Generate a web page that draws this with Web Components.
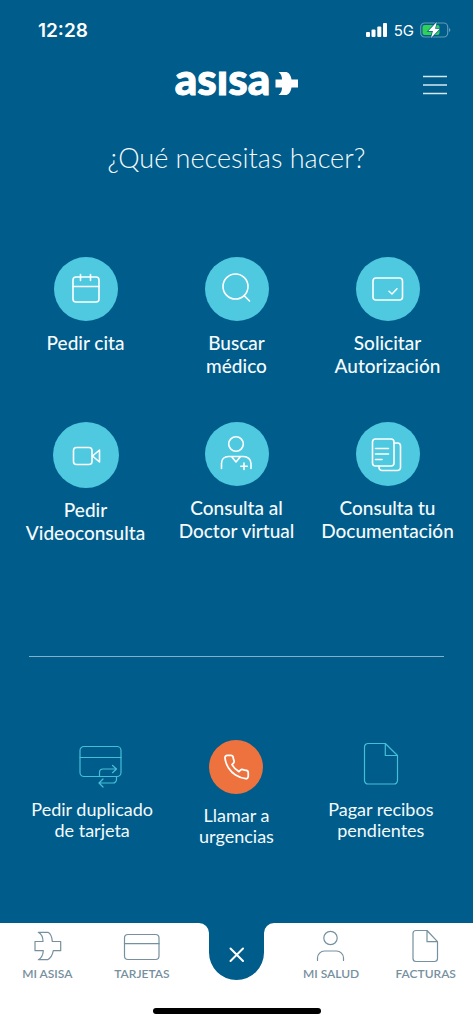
<!DOCTYPE html>
<html lang="es">
<head>
<meta charset="utf-8">
<meta name="viewport" content="width=device-width, initial-scale=1">
<title>asisa</title>
<style>
  html { background: #005c8a; }
  body { margin: 0; font-family: Lato, "Open Sans", sans-serif; color: #f4fafd; }
</style>
</head>
<body>
<asisa-home></asisa-home>

<script>
const ICONS = {
  calendar: [64, 64, '<rect x="19" y="20" width="26" height="25" rx="3"/><path d="M19 29.5h26M26.500 17.500v6M36.500 17.500v6"/>'],
  search: [64, 64, '<circle cx="30.500" cy="29.500" r="12.500"/><path d="M39 38.500l5.500 5.500"/>'],
  authorize: [64, 64, '<rect x="17" y="21" width="29.500" height="22" rx="3"/><path stroke-width="1.5" d="M33 34.300l3 2.700 5-5.200"/>'],
  video: [66, 66, '<rect x="20.500" y="25.500" width="18.500" height="17" rx="3"/><path d="M39.500 34l7-6v12z"/>'],
  doctor: [64, 64, '<circle cx="31" cy="22" r="7.300"/><path d="M16.500 46.500v-5c0-4.500 3-7 7-7h15c4 0 7.500 2.500 7.500 7v5M26.500 34.500l4.500 5.500 4.500-5.500M39 41v6.500M35.800 44.200h6.500"/>'],
  documents: [64, 64, '<rect x="16.500" y="17" width="21.500" height="27" rx="3"/><path d="M38 21h3.500a3 3 0 0 1 3 3v21.500a3 3 0 0 1-3 3H26a3 3 0 0 1-3-3V44M19.500 26.500h13M19.500 32h13M19.500 37.500h6.500"/>'],
  duplicate: [72, 48, '<rect x="24" y="6.500" width="41" height="30" rx="4"/><path d="M24 17.500h41M43.500 36v-3.500a3.500 3.500 0 0 1 3.500-3.500h13M56.500 25.500l4 3.500-4 3.700M60.500 37v2.500a3.500 3.500 0 0 1-3.500 3.500H43.500M47 39l-4 4 4 4"/>'],
  receipt: [72, 48, '<path d="M40.300 3.500H23a3.500 3.500 0 0 0-3.500 3.500v33.500a3.500 3.500 0 0 0 3.500 3.500h26a3.500 3.500 0 0 0 3.500-3.500V15.500zM40.300 3.500v12h12.200"/>'],
  phone: [54, 54, '<path transform="translate(13.500 13) scale(1.170)" d="M22 16.920v3a2 2 0 0 1-2.180 2 19.790 19.790 0 0 1-8.630-3.070 19.500 19.500 0 0 1-6-6 19.790 19.790 0 0 1-3.070-8.670A2 2 0 0 1 4.110 2h3a2 2 0 0 1 2 1.720 12.840 12.840 0 0 0 .7 2.810 2 2 0 0 1-.45 2.110L8.090 9.910a16 16 0 0 0 6 6l1.270-1.270a2 2 0 0 1 2.110-.45 12.840 12.840 0 0 0 2.810.7A2 2 0 0 1 22 16.920z"/>'],
  asisa: [40, 40, '<path d="M8 16.500h8c0-4-1.500-7.500-4.700-9.200H21c3 1.500 4 5 4.300 9.200h8.400v9.200h-7.400c-.8 4-2.500 7.500-5.600 9H11.300c3.500-1.800 4.700-5 5-9H8z"/>'],
  card: [40, 40, '<rect x="2.500" y="9.500" width="34.500" height="25" rx="3.500"/><path d="M2.500 18.700H37"/>'],
  person: [40, 40, '<circle cx="19.500" cy="13" r="6.700"/><path d="M6.500 35.500v-2.500a7 7 0 0 1 7-7h12a7 7 0 0 1 7 7v2.500"/>'],
  invoice: [40, 40, '<path d="M21 5.500h-11a3 3 0 0 0-3 3v25a3 3 0 0 0 3 3h18.500a3 3 0 0 0 3-3V16.700zM21 5.500v11.200H31.500"/>'],
  menu: [24, 24, '<path d="M0 4.500h24M0 13h24M0 21.500h24"/>']
};

class UiIcon extends HTMLElement {
  connectedCallback() {
    const [w, h, body] = ICONS[this.getAttribute('name')];
    this.attachShadow({ mode: 'open' }).innerHTML = `
      <style>
        :host { display: block; }
        svg { display: block; fill: none; stroke: currentColor; stroke-width: var(--stroke, 1.6);
              stroke-linecap: round; stroke-linejoin: round; }
      </style>
      <svg width="${w}" height="${h}" viewBox="0 0 ${w} ${h}" aria-hidden="true">${body}</svg>`;
  }
}
customElements.define('ui-icon', UiIcon);

class StatusBar extends HTMLElement {
  constructor() {
    super();
    this.attachShadow({ mode: 'open' }).innerHTML = `
      <style>
        :host { display: flex; align-items: center; justify-content: space-between; height: 60px;
                padding: 0 22px 0 38px; color: #fff; font-family: Inter, sans-serif; }
        time { font-size: 19px; font-weight: 600; }
        .right { display: flex; align-items: center; gap: 6px; font-size: 15px; font-weight: 400; }
        svg { display: block; }
      </style>
      <time>12:28</time>
      <div class="right">
        <svg width="22" height="16" viewBox="0 0 22 16" fill="#fff" aria-hidden="true">
          <rect x="0" y="10" width="4" height="5" rx="1"/><rect x="5.500" y="7.500" width="4" height="7.500" rx="1"/>
          <rect x="11.300" y="4.500" width="4" height="10.500" rx="1"/><rect x="17" y="1" width="4" height="14" rx="1"/>
        </svg>
        <span>5G</span>
        <svg width="31" height="18" viewBox="0 0 31 18" aria-hidden="true">
          <rect x=".7" y="2" width="27" height="14" rx="4" fill="none" stroke="#5f9ab8" stroke-width="1.200"/>
          <path d="M29.300 7v4c1.300-.5 1.300-3.500 0-4z" fill="#8fb8cd"/>
          <rect x="2.500" y="4" width="17" height="10" rx="2" fill="#30d158"/>
          <path d="M16.800 1L8.300 10h4.600L11 17l8.800-9.300h-4.700z" fill="#fff" stroke="#005c8a" stroke-width="1.400" paint-order="stroke"/>
        </svg>
      </div>`;
  }
}
customElements.define('status-bar', StatusBar);

class AppHeader extends HTMLElement {
  constructor() {
    super();
    this.attachShadow({ mode: 'open' }).innerHTML = `
      <style>
        :host { display: grid; grid-template-columns: 1fr auto 1fr; align-items: center; height: 48px; padding: 0 26px; color: #fff; }
        .logo { grid-column: 2; display: flex; align-items: center; gap: 5px; }
        .word { padding-bottom: 13px; font-size: 44px; line-height: 32px; font-weight: 900;
                -webkit-text-stroke: 1px #fff; clip-path: inset(9px -2px 0 -2px); }
        button { justify-self: end; padding: 0; border: 0; background: none; color: #d5e7f0; cursor: pointer; --stroke: 1.500; }
        svg { display: block; }
      </style>
      <div class="logo">
        <span class="word">asisa</span>
        <svg width="23" height="24" viewBox="0 0 23 24" fill="#fff" aria-hidden="true">
          <path d="M.5 7.500h6.500C7 4.500 6 1.500 3.500 0h8c3 1 4.500 4 5 7.500h6.500v8h-6.500c-.5 3.500-2 6.500-5 7.500h-8C6 21.500 7 18.500 7 15.500H.5z"/>
        </svg>
      </div>
      <button type="button" aria-label="Menú"><ui-icon name="menu"></ui-icon></button>`;
  }
}
customElements.define('app-header', AppHeader);

class ActionTile extends HTMLElement {
  connectedCallback() {
    this.attachShadow({ mode: 'open' }).innerHTML = `
      <style>
        :host { display: block; }
        button { width: 100%; padding: 0; border: 0; background: none; color: inherit; font: inherit; cursor: pointer;
                 display: flex; flex-direction: column; align-items: center; gap: 10px; }
        ui-icon { background: #4fc9e0; color: #fff; border-radius: 50%; }
        .label { font-size: 19px; line-height: 23px; font-weight: 500; text-align: center; white-space: nowrap; }
      </style>
      <button type="button">
        <ui-icon name="${this.getAttribute('icon')}"></ui-icon>
        <span class="label"><slot></slot></span>
      </button>`;
  }
}
customElements.define('action-tile', ActionTile);

class QuickAction extends HTMLElement {
  connectedCallback() {
    this.attachShadow({ mode: 'open' }).innerHTML = `
      <style>
        :host { display: block; }
        button { width: 100%; padding: 0; border: 0; background: none; color: inherit; font: inherit; cursor: pointer;
                 display: flex; flex-direction: column; align-items: center; gap: 11px; }
        ui-icon { color: #45bfd8; --stroke: 1.200; }
        :host([urgent]) ui-icon { background: #ee723e; color: #fff; border-radius: 50%; --stroke: 1.500; }
        .label { font-size: 18px; line-height: 21px; text-align: center; white-space: nowrap; }
      </style>
      <button type="button">
        <ui-icon name="${this.getAttribute('icon')}"></ui-icon>
        <span class="label"><slot></slot></span>
      </button>`;
  }
}
customElements.define('quick-action', QuickAction);

class NavItem extends HTMLElement {
  connectedCallback() {
    this.attachShadow({ mode: 'open' }).innerHTML = `
      <style>
        :host { display: block; }
        a { display: flex; flex-direction: column; align-items: center; color: #76909e; text-decoration: none; --stroke: 1.200; }
        span { font-size: 12px; line-height: 18px; font-weight: 600; white-space: nowrap; }
      </style>
      <a href="#${this.getAttribute('icon')}">
        <ui-icon name="${this.getAttribute('icon')}"></ui-icon>
        <span><slot></slot></span>
      </a>`;
  }
}
customElements.define('nav-item', NavItem);

class BottomNav extends HTMLElement {
  constructor() {
    super();
    this.attachShadow({ mode: 'open' }).innerHTML = `
      <style>
        :host { display: block; background: #fff; }
        nav { display: grid; grid-template-columns: repeat(5, 1fr); height: 85px; }
        nav-item { padding-top: 2px; }
        button { justify-self: center; align-self: start; padding: 0; border: 0; background: none; cursor: pointer; }
        svg { display: block; }
        .home { width: 168px; height: 6px; margin: 0 auto; border-radius: 3px; background: #000; }
        footer { padding-bottom: 10px; }
      </style>
      <nav>
        <nav-item icon="asisa">MI ASISA</nav-item>
        <nav-item icon="card">TARJETAS</nav-item>
        <button type="button" aria-label="Cerrar">
          <svg width="75" height="58" viewBox="0 0 75 58">
            <path fill="#005c8a" d="M0 0h75a10 10 0 0 0-10 10v19.500a27.500 27.500 0 0 1-55 0V10A10 10 0 0 0 0 0z"/>
            <path fill="none" stroke="#fff" stroke-width="2" stroke-linecap="round" d="M31.500 25.500l12.500 12.500M44 25.500L31.500 38"/>
          </svg>
        </button>
        <nav-item icon="person">MI SALUD</nav-item>
        <nav-item icon="invoice">FACTURAS</nav-item>
      </nav>
      <footer><div class="home"></div></footer>`;
  }
}
customElements.define('bottom-nav', BottomNav);

class AsisaHome extends HTMLElement {
  constructor() {
    super();
    this.attachShadow({ mode: 'open' }).innerHTML = `
      <style>
        :host { display: flex; flex-direction: column; min-height: 100vh; background: #005c8a; }
        h1 { margin: 33px 0 0; font-size: 27px; line-height: 34px; font-weight: 300; text-align: center; }
        .tiles { display: grid; grid-template-columns: repeat(3, 1fr); row-gap: 45px; padding: 0 10px; margin-top: 82px; }
        hr { width: calc(100% - 58px); height: 1px; margin: 112px auto 0; border: 0; background: #7fb3cb; }
        .quick { display: grid; grid-template-columns: repeat(3, 1fr); padding: 0 20px; margin: 83px 0 40px; }
        bottom-nav { margin-top: auto; }
      </style>
      <status-bar></status-bar>
      <app-header></app-header>
      <h1>¿Qué necesitas hacer?</h1>
      <section class="tiles">
        <action-tile icon="calendar">Pedir cita</action-tile>
        <action-tile icon="search">Buscar<br>médico</action-tile>
        <action-tile icon="authorize">Solicitar<br>Autorización</action-tile>
        <action-tile icon="video">Pedir<br>Videoconsulta</action-tile>
        <action-tile icon="doctor">Consulta al<br>Doctor virtual</action-tile>
        <action-tile icon="documents">Consulta tu<br>Documentación</action-tile>
      </section>
      <hr>
      <section class="quick">
        <quick-action icon="duplicate">Pedir duplicado<br>de tarjeta</quick-action>
        <quick-action icon="phone" urgent>Llamar a<br>urgencias</quick-action>
        <quick-action icon="receipt">Pagar recibos<br>pendientes</quick-action>
      </section>
      <bottom-nav></bottom-nav>`;
  }
}
customElements.define('asisa-home', AsisaHome);
</script>
</body>
</html>
